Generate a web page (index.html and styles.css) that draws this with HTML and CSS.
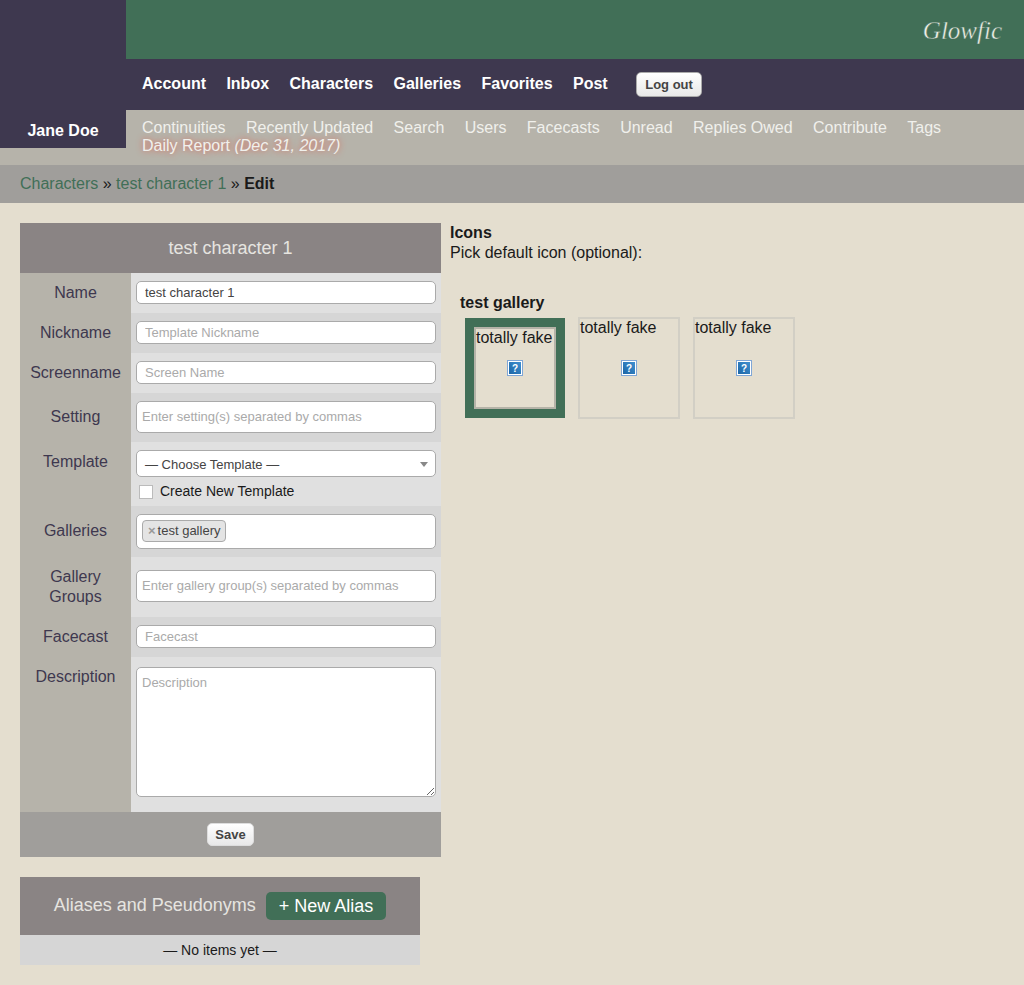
FILE: index.html
```html
<!DOCTYPE html>
<html lang="en">
<head>
  <meta charset="UTF-8" />
  <title>Edit Character | Glowfic</title>
  <link rel="stylesheet" href="styles.css">
</head>
<body>
  <header class="header">
    <div class="user-box">Jane Doe</div>
    <div class="header-main">
      <div class="logo-bar"><span class="logo">Glowfic</span></div>
      <nav class="nav">
        <a href="#">Account</a>
        <a href="#">Inbox</a>
        <a href="#">Characters</a>
        <a href="#">Galleries</a>
        <a href="#">Favorites</a>
        <a href="#">Post</a>
        <button class="btn btn-logout">Log out</button>
      </nav>
      <nav class="subnav">
        <a href="#">Continuities</a>
        <a href="#">Recently Updated</a>
        <a href="#">Search</a>
        <a href="#">Users</a>
        <a href="#">Facecasts</a>
        <a href="#">Unread</a>
        <a href="#">Replies Owed</a>
        <a href="#">Contribute</a>
        <a href="#">Tags</a>
        <a href="#" class="daily">Daily Report <em>(Dec 31, 2017)</em></a>
      </nav>
    </div>
  </header>

  <div class="breadcrumbs">
    <a href="#">Characters</a> » <a href="#">test character 1</a> » <b>Edit</b>
  </div>

  <main class="content">
    <div class="left-col">
      <form class="char-form">
        <table class="form-table">
          <colgroup>
            <col class="col-label" />
            <col />
          </colgroup>
          <thead>
            <tr><th colspan="2" class="form-title">test character 1</th></tr>
          </thead>
          <tbody>
            <tr>
              <th>Name</th>
              <td><input type="text" class="field" value="test character 1" /></td>
            </tr>
            <tr>
              <th>Nickname</th>
              <td><input type="text" class="field" placeholder="Template Nickname" /></td>
            </tr>
            <tr>
              <th>Screenname</th>
              <td><input type="text" class="field" placeholder="Screen Name" /></td>
            </tr>
            <tr>
              <th class="tall">Setting</th>
              <td><input type="text" class="field field-tall" placeholder="Enter setting(s) separated by commas" /></td>
            </tr>
            <tr>
              <th class="top">Template</th>
              <td class="template-cell">
                <div class="select-box">
                  <span>— Choose Template —</span>
                  <span class="select-arrow"></span>
                </div>
                <label class="check-line"><input type="checkbox" />Create New Template</label>
              </td>
            </tr>
            <tr>
              <th class="tall">Galleries</th>
              <td class="tag-cell">
                <div class="tag-box">
                  <span class="tag"><span class="tag-x">×</span>test gallery</span>
                </div>
              </td>
            </tr>
            <tr>
              <th class="two-line">Gallery Groups</th>
              <td class="groups-cell"><input type="text" class="field field-tall" placeholder="Enter gallery group(s) separated by commas" /></td>
            </tr>
            <tr>
              <th>Facecast</th>
              <td><input type="text" class="field" placeholder="Facecast" /></td>
            </tr>
            <tr>
              <th class="top">Description</th>
              <td class="desc-cell"><textarea class="field-area" placeholder="Description"></textarea></td>
            </tr>
          </tbody>
          <tfoot>
            <tr><td colspan="2" class="form-footer"><button type="button" class="btn btn-save">Save</button></td></tr>
          </tfoot>
        </table>
      </form>

      <section class="aliases">
        <div class="aliases-title">
          <span class="aliases-name">Aliases and Pseudonyms</span>
          <a href="#" class="new-alias">+ New Alias</a>
        </div>
        <div class="aliases-empty">— No items yet —</div>
      </section>
    </div>

    <div class="right-col">
      <div class="icons-head"><b>Icons</b><br />Pick default icon (optional):</div>
      <div class="gallery">
        <div class="gallery-name">test gallery</div>
        <div class="icon-list">
          <div class="icon icon-selected">
            <div class="icon-inner">
              totally fake
              <svg class="icon-img" width="16" height="16" viewBox="0 0 16 16"><defs><linearGradient id="qblue" x1="1" y1="0" x2="0" y2="1"><stop offset="0" stop-color="#3f8fd0"/><stop offset="1" stop-color="#1c66a6"/></linearGradient></defs><rect x="0.5" y="0.5" width="15" height="15" fill="#fff" stroke="#7fa6d6"/><rect x="2" y="2" width="12" height="12" fill="url(#qblue)"/><text x="8" y="12" text-anchor="middle" class="icon-q">?</text></svg>
            </div>
          </div>
          <div class="icon">
            totally fake
            <svg class="icon-img" width="16" height="16" viewBox="0 0 16 16"><rect x="0.5" y="0.5" width="15" height="15" fill="#fff" stroke="#7fa6d6"/><rect x="2" y="2" width="12" height="12" fill="url(#qblue)"/><text x="8" y="12" text-anchor="middle" class="icon-q">?</text></svg>
          </div>
          <div class="icon">
            totally fake
            <svg class="icon-img" width="16" height="16" viewBox="0 0 16 16"><rect x="0.5" y="0.5" width="15" height="15" fill="#fff" stroke="#7fa6d6"/><rect x="2" y="2" width="12" height="12" fill="url(#qblue)"/><text x="8" y="12" text-anchor="middle" class="icon-q">?</text></svg>
          </div>
        </div>
      </div>
    </div>
  </main>
</body>
</html>
```

FILE: styles.css
```css
* {
  box-sizing: border-box;
}
body {
  margin: 0;
  background: #e4decf;
  color: #1a1a1a;
  font-family: 'Liberation Sans', Arial, sans-serif;
  font-size: 16px;
  line-height: 20px;
}
a {
  text-decoration: none;
}

/* header */
.header {
  display: flex;
  background: #b6b3aa;
}
.user-box {
  width: 126px;
  height: 148px;
  padding-bottom: 7px;
  flex: none;
  display: flex;
  align-items: flex-end;
  justify-content: center;
  background: #3e384f;
  color: #fff;
  font-weight: bold;
}
.header-main {
  flex: 1;
}
.logo-bar {
  height: 59px;
  padding: 13px 22px 0 0;
  background: #416f57;
  text-align: right;
}
.logo {
  color: #f0f0e8;
  font-family: 'Liberation Serif', serif;
  font-style: italic;
  font-size: 25px;
  line-height: 36px;
  -webkit-text-stroke: 0.4px #416f57;
}
.nav {
  height: 51px;
  padding: 15px 0 0 16px;
  display: flex;
  align-items: flex-start;
  gap: 20.4px;
  background: #3e384f;
}
.nav a {
  color: #fff;
  font-weight: bold;
}
.btn {
  border: 1px solid #aaa;
  border-radius: 5px;
  background: linear-gradient(#fff, #e8e8e8);
  color: #444;
  font-family: inherit;
  font-size: 13px;
  font-weight: bold;
  cursor: pointer;
}
.btn-logout {
  width: 66px;
  height: 25px;
  margin: -2px 0 0 8px;
  padding: 0;
}
.subnav {
  height: 55px;
  padding: 9px 60px 0 16px;
  display: flex;
  flex-wrap: wrap;
  align-content: flex-start;
  column-gap: 20.4px;
  line-height: 18px;
}
.subnav a {
  color: #f0f0ec;
}
.subnav .daily {
  text-shadow: 0 0 6px #e0604f;
}

.breadcrumbs {
  height: 38px;
  padding: 9px 20px;
  background: #a09e9b;
}
.breadcrumbs a {
  color: #416f57;
}

/* page */
.content {
  padding: 20px;
  display: flex;
  gap: 9px;
  align-items: flex-start;
}
.left-col {
  width: 421px;
}
.form-table {
  width: 421px;
  border-collapse: collapse;
  table-layout: fixed;
}
.col-label {
  width: 111px;
}
.form-table .form-title {
  height: 50px;
  padding: 0;
  background: #8a8484;
  color: #e6e4e0;
  font-size: 18px;
  font-weight: normal;
}
.form-table th {
  padding: 0 5px;
  background: #b6b3aa;
  color: #3e384f;
  font-weight: normal;
}
.form-table th.tall {
  padding-bottom: 2px;
}
.form-table th.top {
  padding-top: 10px;
  vertical-align: top;
}
.form-table th.two-line {
  padding: 10px 15px;
}
.form-table td {
  padding: 8px 5px 9px;
}
.form-table tbody tr:nth-child(odd) td {
  background: #e0e0e0;
}
.form-table tbody tr:nth-child(even) td {
  background: #d6d6d6;
}
.field {
  display: block;
  width: 300px;
  height: 23px;
  padding: 0 8px;
  border: 1px solid #aaa;
  border-radius: 5px;
  background: #fff;
  color: #444;
  font-family: inherit;
  font-size: 13px;
}
.field-tall {
  height: 32px;
  padding: 0 5px 2px;
}
.field::placeholder,
.field-area::placeholder {
  color: #aaa;
  opacity: 1;
}
.form-table .groups-cell {
  padding-bottom: 10px;
}
.form-table .template-cell {
  padding-bottom: 5px;
}
.select-box {
  height: 27px;
  padding: 2px 7px 0 8px;
  display: flex;
  align-items: center;
  justify-content: space-between;
  border: 1px solid #aaa;
  border-radius: 5px;
  background: #fff;
  color: #444;
  font-size: 13px;
}
.select-arrow {
  border-top: 5px solid #888;
  border-left: 4px solid transparent;
  border-right: 4px solid transparent;
}
.check-line {
  margin-top: 4px;
  display: flex;
  align-items: center;
  font-size: 14px;
}
.check-line input {
  appearance: none;
  width: 14px;
  height: 14px;
  margin: 2px 7px 0 3px;
  border: 1px solid #bbb;
  background: #fff;
}
.form-table .tag-cell {
  padding-bottom: 8px;
}
.tag-box {
  height: 35px;
  padding: 5px;
  border: 1px solid #aaa;
  border-radius: 5px;
  background: #fff;
}
.tag {
  display: inline-block;
  height: 22px;
  padding: 0 5px;
  border: 1px solid #aaa;
  border-radius: 4px;
  background: #e4e4e4;
  color: #444;
  font-size: 13px;
  line-height: 20px;
}
.tag-x {
  margin-right: 2px;
  color: #999;
  font-weight: bold;
}
.form-table .desc-cell {
  padding: 10px 5px 15px;
}
.field-area {
  display: block;
  width: 300px;
  height: 130px;
  padding: 7px 5px;
  border: 1px solid #aaa;
  border-radius: 5px;
  background: #fff;
  font-family: inherit;
  font-size: 13px;
}
.form-table .form-footer {
  height: 45px;
  padding: 0;
  background: #a09e9b;
  text-align: center;
}
.btn-save {
  width: 47px;
  height: 23px;
  padding: 0;
  border: 1px solid #ddd;
  display: inline-block;
  vertical-align: middle;
}

/* aliases */
.aliases {
  width: 400px;
  margin-top: 20px;
}
.aliases-title {
  height: 58px;
  display: flex;
  align-items: center;
  justify-content: center;
  gap: 10px;
  background: #8a8484;
  color: #e6e4e0;
  font-size: 18px;
}
.aliases-name {
  margin-bottom: 2px;
}
.new-alias {
  height: 28px;
  padding: 0 13px;
  border-radius: 5px;
  background: #416f57;
  color: #fff;
  line-height: 28px;
}
.aliases-empty {
  height: 30px;
  background: #d6d6d6;
  font-size: 14px;
  line-height: 30px;
  text-align: center;
}

/* icons */
.gallery {
  margin: 30px 0 0 10px;
}
.gallery-name {
  font-weight: bold;
  margin-bottom: 4px;
}
.icon-list {
  margin-left: 5px;
  display: flex;
  align-items: center;
  gap: 13px;
}
.icon {
  width: 102px;
  height: 102px;
  border: 2px solid #d2cfc5;
  line-height: 18px;
}
.icon-img {
  display: block;
  margin: 23px auto 0;
}
.icon-q {
  fill: #fff;
  font-size: 10px;
  font-weight: bold;
}
.icon-selected {
  width: 100px;
  height: 100px;
  padding: 9px;
  border: 0;
  background: #416f57;
}
.icon-inner {
  height: 82px;
  border: 2px solid #b5b3a8;
  background: #e4decf;
}
.icon-inner .icon-img {
  margin-top: 13px;
}
```
